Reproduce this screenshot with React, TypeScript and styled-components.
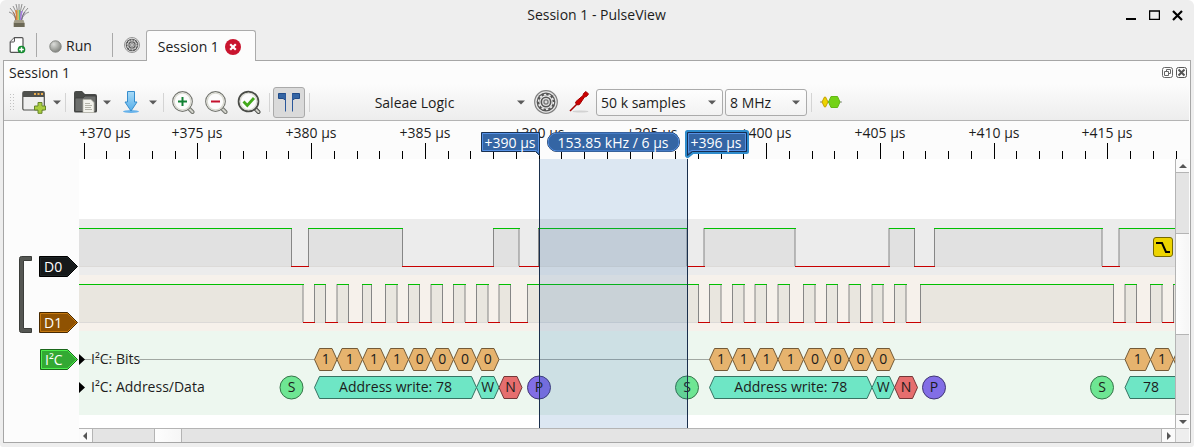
import React from "react";
import styled, { createGlobalStyle } from "styled-components";

const GlobalStyle = createGlobalStyle`
  * { box-sizing: border-box; }
  body {
    margin: 0;
    background: #fff;
    color: #1c1c1c;
    font: 14px/20px "Open Sans", "Noto Sans", sans-serif;
  }
  button, select { font: inherit; color: inherit; }
  svg { display: block; flex: none; }
`;

const Window = styled.main`
  display: flex;
  flex-direction: column;
  min-height: 100vh;
  padding: 0 3px 4px;
  background: #eeeeee;
  border-radius: 6px 6px 3px 3px;
`;

const TitleBar = styled.header`
  display: grid;
  grid-template-columns: 1fr auto 1fr;
  align-items: center;
  height: 30px;
  padding: 0 6px 0 5px;
`;

const Title = styled.h1`
  margin: 0;
  font-size: 14px;
  font-weight: 400;
`;

const WindowControls = styled.div`
  display: flex;
  justify-content: flex-end;
  gap: 7px;
`;

const IconButton = styled.button<{ $w: number }>`
  display: flex;
  align-items: center;
  justify-content: center;
  flex: none;
  width: ${(p) => p.$w}px;
  padding: 0;
  border: 0;
  background: none;
`;

const TabStrip = styled.nav`
  display: flex;
  align-items: center;
  height: 30px;
  padding-left: 5px;
`;

const RunButton = styled.button`
  display: flex;
  align-items: center;
  gap: 4px;
  padding: 2px 0 0;
  border: 0;
  background: none;
`;

const Divider = styled.span<{ $h: number; $gap: string; $dark?: boolean }>`
  flex: none;
  width: 1px;
  height: ${(p) => p.$h}px;
  margin: ${(p) => p.$gap};
  background: ${(p) => (p.$dark ? "#a9a9a9" : "#d4d4d4")};
`;

const Tab = styled.div`
  position: relative;
  z-index: 1;
  display: flex;
  align-items: center;
  gap: 6px;
  align-self: stretch;
  margin: 0 0 -1px 6px;
  padding: 1px 14px 0 11px;
  border: 1px solid #ababab;
  border-bottom: 0;
  border-radius: 3px 3px 0 0;
  background: #fcfcfc;
`;

const TabLabel = styled.button`
  padding: 0;
  border: 0;
  background: none;
`;

const Panel = styled.section`
  display: flex;
  flex: 1;
  flex-direction: column;
  border: 1px solid #a6a6a6;
  background: #fcfcfc;
`;

const PanelHead = styled.div`
  display: flex;
  align-items: center;
  justify-content: space-between;
  height: 23px;
  padding: 0 3px 0 5px;
`;

const PanelTitle = styled.h2`
  margin: 0;
  font-size: 14px;
  font-weight: 400;
`;

const DockButtons = styled.div`
  display: flex;
  gap: 3px;
`;

const Toolbar = styled.div`
  display: flex;
  align-items: center;
  height: 37px;
  margin-right: 1px;
  padding-left: 5px;
  border-bottom: 1px solid #b4b4b4;
  background: linear-gradient(#fcfcfc, #ededed);
`;

const ToggleButton = styled.button`
  display: flex;
  align-items: center;
  justify-content: center;
  flex: none;
  width: 32px;
  height: 31px;
  padding: 0;
  border: 1px solid #aaaaaa;
  border-radius: 3px;
  background: #dadada;
`;

const DeviceButton = styled.button`
  display: flex;
  align-items: center;
  width: 217px;
  flex: none;
  padding: 1px 4px 0 0;
  border: 0;
  background: none;
  span { flex: 1; text-align: center; }
`;

const Combo = styled.label<{ $w: number }>`
  display: flex;
  align-items: center;
  flex: none;
  width: ${(p) => p.$w}px;
  height: 27px;
  margin-right: 2px;
  padding-right: 6px;
  border: 1px solid #ababab;
  border-radius: 3px;
  background: linear-gradient(#fefefe, #f2f2f2);
  select {
    flex: 1;
    min-width: 0;
    height: 25px;
    padding: 1px 0 0 4px;
    border: 0;
    outline: 0;
    appearance: none;
    background: none;
  }
`;

const View = styled.div`
  display: grid;
  flex: 1;
  grid-template-columns: 75px minmax(0, 1fr) 14px;
  grid-template-rows: 38px 1fr 14px;
  padding-right: 1px;
`;

const RulerCell = styled.div`
  grid-column: 2 / 4;
`;

const Gutter = styled.div`
  display: flex;
  flex-direction: column;
  align-items: flex-end;
  gap: 16px;
  padding: 97px 1px 0 0;
`;

const ChannelGroup = styled.div`
  display: flex;
  gap: 7px;
`;

const ChannelList = styled.div`
  display: flex;
  flex-direction: column;
  gap: 35px;
`;

const TagButton = styled.button`
  display: grid;
  align-items: center;
  padding: 0;
  border: 0;
  background: none;
  color: #fff;
  text-align: left;
  > * { grid-area: 1 / 1; }
  span { padding-left: 5px; line-height: 20px; }
`;

const ChartCell = styled.div`
  position: relative;
  overflow: hidden;
  background: #fff;
`;

const TriggerBadge = styled.button`
  position: absolute;
  top: 78px;
  right: 2px;
  width: 20px;
  height: 20px;
  padding: 0;
  border: 1px solid #766a00;
  border-radius: 3px;
  background: #edd400;
`;

const ScrollTrack = styled.div<{ $vertical?: boolean }>`
  display: flex;
  flex-direction: ${(p) => (p.$vertical ? "column" : "row")};
  background: #e4e4e4;
  border: 0 solid #b4b4b4;
  border-width: ${(p) => (p.$vertical ? "0 0 0 1px" : "1px 0 0 0")};
`;

const ScrollArrow = styled.button`
  display: flex;
  align-items: center;
  justify-content: center;
  flex: none;
  width: 13px;
  height: 13px;
  padding: 0;
  border: 0;
  background: #fafafa;
`;

const ScrollSpace = styled.div<{ $grow: number; $vertical?: boolean }>`
  flex: ${(p) => p.$grow} 0 0;
  border: 0 solid #b4b4b4;
  border-width: ${(p) => (p.$vertical ? "1px 0" : "0 1px")};
`;

const ScrollThumb = styled.div<{ $grow: number }>`
  flex: ${(p) => p.$grow} 0 0;
  background: linear-gradient(90deg, #fdfdfd, #f6f6f6);
`;

const Corner = styled.div`
  border: solid #c4c4c4;
  border-width: 1px 0 0 1px;
  background: #eeeeee;
`;

const Caret = () => (
  <svg width="8" height="5" viewBox="0 0 8 5">
    <path d="M0 .5h8L4 4.5z" fill="#5a5a5a" />
  </svg>
);

const WireFan = () => (
  <svg width="22" height="24" viewBox="0 0 22 24">
    <g fill="none" strokeWidth=".9">
      <path d="M8 18Q7 11 1 9M8 17Q7 9 2 5M9 17Q9 8 5 3M13 18Q15 11 21 9M13 17Q15 9 20 5M12 17Q13 8 17 3M10 16Q10 7 8 1M12 16Q12 7 14 1M11 16V1" stroke="#858585" />
      <path d="M8 18Q8 13 5 9" stroke="#a56b4b" />
      <path d="M9 18Q9 12 8 7" stroke="#e08334" strokeWidth="1.5" />
      <path d="M10.3 18V7" stroke="#ded05a" strokeWidth="1.3" />
      <path d="M11.5 18V7" stroke="#58b884" strokeWidth="1.3" />
      <path d="M12.5 18Q12.5 12 14 8" stroke="#a77be1" strokeWidth="1.5" />
      <path d="M13.5 18Q14 12 17 9" stroke="#716487" />
    </g>
    <path d="M6.5 17h9l1 3v4H5.500v-4z" fill="#a19c88" />
    <path d="M6 20h10.500v4H6z" fill="#6c6957" />
  </svg>
);

const NewSessionIcon = () => (
  <svg width="17" height="17" viewBox="0 0 17 17">
    <path d="M5.500 .7H13q1 0 1 1V14.300q0 1-1 1H2.200q-1 0-1-1V5z" fill="#fff" stroke="#555" strokeWidth="1.200" />
    <path d="M1.200 5h3.300q1 0 1-1V.7" fill="#eee" stroke="#555" />
    <circle cx="12.500" cy="12.500" r="3.800" fill="#138a2f" />
    <path d="M12.500 10.200v4.600M10.200 12.500h4.600" stroke="#fff" strokeWidth="1.400" />
  </svg>
);

const RunIcon = () => (
  <svg width="13" height="13" viewBox="0 0 13 13">
    <defs>
      <radialGradient id="ball" cx=".35" cy=".3" r=".8">
        <stop offset="0" stopColor="#dcddda" />
        <stop offset=".5" stopColor="#aaaca7" />
        <stop offset="1" stopColor="#777974" />
      </radialGradient>
    </defs>
    <circle cx="6.500" cy="6.500" r="5.700" fill="url(#ball)" stroke="#858783" />
  </svg>
);

const GearIcon = ({ size }: { size: number }) => (
  <svg width={size} height={size} viewBox="0 0 24 24">
    <circle cx="12" cy="12" r="11.300" fill="#e8e8e8" stroke="#828282" strokeWidth="1.200" />
    <circle cx="12" cy="12" r="9.400" fill="#555555" />
    <circle cx="12" cy="12" r="7.400" fill="none" stroke="#ededed" strokeWidth="1.500" strokeDasharray="2.300 2.349" />
    <circle cx="12" cy="12" r="6.100" fill="none" stroke="#ededed" strokeWidth="1.200" />
    <circle cx="12" cy="12" r="3.300" fill="#777" stroke="#dedede" strokeWidth="1.200" />
    <circle cx="12" cy="12" r="1.400" fill="#dedede" />
  </svg>
);

const CloseTabIcon = () => (
  <svg width="16" height="16" viewBox="0 0 16 16">
    <circle cx="8" cy="8" r="8" fill="#c9152f" />
    <path d="M5.200 5.200l5.600 5.600M10.800 5.200l-5.600 5.600" stroke="#fff" strokeWidth="2.200" />
  </svg>
);

const AddDecoderIcon = () => (
  <svg width="24" height="24" viewBox="0 0 24 24">
    <rect x=".8" y="1.500" width="21.500" height="18.500" rx="1.500" fill="#efefef" stroke="#50524e" strokeWidth="1.200" />
    <path d="M1 2h21v5H1z" fill="#50524e" />
    <path d="M12 3h2v2h-2zM15.500 3h2v2h-2zM19 3h2v2h-2z" fill="#e9ac4d" />
    <path d="M16 12.500h4v3.500h3.500v4H20v3.300h-4V20h-3.500v-4H16z" fill="#a9cd3e" stroke="#66852a" />
  </svg>
);

const FolderIcon = () => (
  <svg width="25" height="24" viewBox="0 0 25 24">
    <path d="M1 21V3q0-2 2-2h6l3 3h10q2 0 2 2v15q0 1.500-1.500 1.500h-20Q1 22.500 1 21z" fill="#484a48" />
    <path d="M2 9q0-1 1-1h7l2-2h11v14.500q0 1-1 1H3q-1 0-1-1z" fill="#6d6f6d" stroke="#3c3e3c" strokeWidth=".8" />
    <path d="M10 9.500h8l3 3v10H10z" fill="#f2f2ec" stroke="#b3b3a8" strokeWidth=".7" />
    <path d="M12 13.500h5M12 15.500h7M12 17.500h6M12 19.500h7" stroke="#b3b3a8" />
  </svg>
);

const SaveIcon = () => (
  <svg width="18" height="24" viewBox="0 0 18 24">
    <defs>
      <linearGradient id="save" x2="0" y2="1">
        <stop offset="0" stopColor="#a9dbf7" />
        <stop offset="1" stopColor="#55aeea" />
      </linearGradient>
    </defs>
    <ellipse cx="9" cy="21.500" rx="8" ry="1.500" fill="#67b2ea" />
    <path d="M5.500 1.500h7V12H15l-6 9-6-9h2.500z" fill="url(#save)" stroke="#358dcd" />
  </svg>
);

const ZoomIcon = ({ mode }: { mode: "in" | "out" | "fit" }) => {
  const outline = mode === "fit" ? "#4a4c48" : "#73756f";
  return (
    <svg width="24" height="24" viewBox="0 0 24 24">
      <path d="M17 17.500l4.500 4.500" stroke={outline} strokeWidth="4" strokeLinecap="round" />
      <path d="M17 17.500l4.500 4.500" stroke="#d3d4cc" strokeWidth="2" strokeLinecap="round" />
      <circle cx="11.500" cy="11.500" r="9.800" fill="#fcfcfc" stroke={outline} strokeWidth={mode === "fit" ? 2 : 1.2} />
      <circle cx="11.500" cy="11.500" r="8.400" fill="none" stroke="#dadbd2" strokeWidth="1.400" />
      {mode === "in" && <path d="M11.500 7v9M7 11.500h9" stroke="#128234" strokeWidth="2" />}
      {mode === "out" && <path d="M7 11.500h9" stroke="#c5112d" strokeWidth="2" />}
      {mode === "fit" && <path d="M6.500 11.500l3.800 4 6.700-7.500" fill="none" stroke="#43a91b" strokeWidth="2.800" />}
    </svg>
  );
};

const CursorsIcon = () => (
  <svg width="22" height="20" viewBox="0 0 22 20">
    <path d="M.5 1.500h7v6.500L5 6.500H.500zM21.500 1.500h-7v6.500L17 6.500h4.500z" fill="#3465a4" stroke="#204a87" />
    <path d="M7.500 1v18.500M14.500 1v18.500" stroke="#2b589b" />
  </svg>
);

const ProbeIcon = () => (
  <svg width="21" height="22" viewBox="0 0 21 22">
    <ellipse cx="11.500" cy="20.500" rx="8" ry="1" fill="#d2d2d2" />
    <path d="M1 20L9 12" stroke="#a40000" strokeWidth="1.600" />
    <path d="M7 10.500l7-6 .5-2L17 .5l2.500 2.500-2 2.500-2 .5-5 7.500-2 .5-2-2z" fill="#cc0000" stroke="#a40000" />
  </svg>
);

const DecodersIcon = () => (
  <svg width="22" height="14" viewBox="0 0 22 14">
    <path d="M0 7h22" stroke="#888" />
    <path d="M2 7l2.500-5h1L8 7l-2.500 5h-1z" fill="#edd400" stroke="#c4a000" />
    <path d="M8.500 7l2.500-5.500h6.500L20 7l-2.500 5.500H11z" fill="#73d216" stroke="#62b814" />
  </svg>
);

const arrowPaths: Record<string, string> = {
  up: "M0 6l4-4 4 4z",
  down: "M0 2l4 4 4-4z",
  left: "M5 0L1 4l4 4z",
  right: "M2 0l4 4-4 4z",
};

const Arrow = ({ dir }: { dir: string }) => (
  <ScrollArrow aria-label={"Scroll " + dir}>
    <svg width="8" height="8" viewBox="0 0 8 8">
      <path d={arrowPaths[dir]} fill="#555" />
    </svg>
  </ScrollArrow>
);

const tagShape = (inset: number, w: number) =>
  `M${inset} ${inset}H${w - 10.500}L${w - inset} 10.500L${w - 10.500} ${21 - inset}H${inset}z`;

function ChannelTag(p: { name: string; w: number; fill: string; light: string; dark: string }) {
  return (
    <TagButton>
      <svg width={p.w} height="21">
        <path d={tagShape(0.5, p.w)} fill={p.fill} stroke={p.dark} />
        <path d={tagShape(1.5, p.w)} fill="none" stroke={p.light} />
      </svg>
      <span>{p.name}</span>
    </TagButton>
  );
}

/* Time axis: 22.75px per microsecond, +380 µs sits 232.5px into the view. */
const timeToX = (t: number) => Math.floor(232.5 + 22.75 * (t - 380));
const times = Array.from({ length: 49 }, (_, i) => 370 + i);

function Ruler() {
  return (
    <svg width="100%" height="38" fill="#1c1c1c">
      {times.map((t) => {
        const major = t % 5 === 0;
        return <rect key={t} x={timeToX(t)} y={major ? 22 : 30} width="1" height={major ? 16 : 8} fill="#000" />;
      })}
      {times.filter((t) => t % 5 === 0).map((t) => (
        <text key={t} x={Math.max(timeToX(t), 26)} y="17" textAnchor="middle">{`+${t} µs`}</text>
      ))}
      <path d="M402.500 11.500h58v23l-4-4h-54z" fill="#3465a4" stroke="#1a3252" />
      <path d="M403.500 12.500h56v19l-2-2h-54z" fill="none" stroke="#5591e6" />
      <path d="M608.500 11.500h59v19h-54l-5 4z" fill="#3465a4" stroke="#2e8bcb" strokeWidth="5" strokeLinejoin="round" />
      <path d="M608.500 11.500h59v19h-54l-5 4z" fill="#3465a4" stroke="#142c52" />
      <path d="M609.500 12.500h57v17h-54l-3 2z" fill="none" stroke="#5591e6" />
      <rect x="468.500" y="11.500" width="132" height="19" rx="9.500" fill="#3465a4" stroke="#1a3252" />
      <rect x="469" y="12" width="131" height="18" rx="9" fill="none" stroke="#5591e6" />
      <g fill="#fff" textAnchor="middle">
        <text x="431" y="27">+390 µs</text>
        <text x="534" y="27">153.85 kHz / 6 µs</text>
        <text x="637" y="27">+396 µs</text>
      </g>
    </svg>
  );
}

/* Each list holds the x of every edge; the line starts high and toggles. */
const d0Edges = [212.5, 229.5, 323.5, 414.5, 440, 459.5, 608, 625, 716, 810, 835.5, 855.5, 1023, 1040];
const d1Edges = [
  224, 235.5, 246.5, 258, 269.5, 283.5, 292.5, 306.5, 318, 329.5, 340.5, 352, 363.5, 374.5, 386, 397.5, 409, 420, 431.5,
  448.5, 619.5, 630.5, 642, 653.5, 665, 676, 687.5, 699, 710.5, 724.5, 736, 747.5, 758.5, 770, 781.5, 793, 804, 815.5,
  827, 841.5, 1034.5, 1046, 1057.5, 1071.5, 1083, 1094.5,
];
const END = 3000;

function Trace({ edges, top, fill }: { edges: number[]; top: number; fill: string }) {
  const points = [0, ...edges, END];
  return (
    <g>
      <rect y={top + 38} width="100%" height="1" fill="#dcdad8" />
      {points.slice(0, -1).map((x, i) => {
        const w = points[i + 1] - x;
        return i % 2 === 0 ? <rect key={x} x={x} y={top} width={w} height="38" fill={fill} /> : null;
      })}
      {edges.map((x) => (
        <rect key={x} x={x - 0.5} y={top} width="1" height="38" fill="#868686" />
      ))}
      {points.slice(0, -1).map((x, i) => {
        const low = i % 2 === 1;
        const from = Math.floor(x);
        return (
          <rect key={x} x={from} y={low ? top + 38 : top} width={Math.floor(points[i + 1]) - from + 1} height="1" fill={low ? "#c80000" : "#00c000"} />
        );
      })}
    </g>
  );
}

const palette: Record<string, [string, string]> = {
  bit: ["#e6b36e", "#735a37"],
  data: ["#6ee6c5", "#377363"],
  nack: ["#e66e6e", "#733737"],
  start: ["#6ee693", "#37734a"],
  stop: ["#826ee6", "#413773"],
};

function Hex(p: { from: number; to: number; y: number; kind: string; label: string; labelX?: number }) {
  const { from: a, to: b, y } = p;
  const [fill, stroke] = palette[p.kind];
  return (
    <g>
      <path d={`M${a} ${y}L${a + 5} ${y - 11}H${b - 5}L${b} ${y}L${b - 5} ${y + 11}H${a + 5}z`} fill={fill} stroke={stroke} />
      <text x={p.labelX ?? (a + b) / 2} y={Math.floor(y) + 5} textAnchor="middle">{p.label}</text>
    </g>
  );
}

function Dot({ x, kind, label }: { x: number; kind: string; label: string }) {
  const [fill, stroke] = palette[kind];
  return (
    <g>
      <circle cx={x} cy="228.500" r="11.500" fill={fill} stroke={stroke} />
      <text x={x} y="233" textAnchor="middle">{label}</text>
    </g>
  );
}

const bitFrames = [
  [235.5, 258, 283.5, 306.5, 329.5, 352, 374.5, 397.5, 420],
  [630.5, 653.5, 676, 699, 724.5, 747.5, 770, 793, 815.5],
  [1046, 1071.5, 1094.5, 1118],
];

function Chart() {
  return (
    <svg width="100%" height="269" fill="#1c1c1c">
      <rect y="60" width="100%" height="56" fill="#ececec" />
      <rect y="116" width="100%" height="56" fill="#f6f1eb" />
      <rect y="172" width="100%" height="84" fill="#edf7ef" />
      <Trace edges={d0Edges} top={69} fill="#e1e1e1" />
      <Trace edges={d1Edges} top={125} fill="#e9e6df" />
      <rect y="200" width="100%" height="1" fill="#a1a8a2" />
      {bitFrames.map((bounds) =>
        bounds.slice(0, -1).map((x, i) => (
          <Hex key={x} from={x} to={bounds[i + 1]} y={200.5} kind="bit" label={i < 4 ? "1" : "0"} />
        ))
      )}
      <Hex from={235.5} to={397.5} y={228.5} kind="data" label="Address write: 78" />
      <Hex from={397.5} to={420} y={228.5} kind="data" label="W" />
      <Hex from={420} to={443} y={228.5} kind="nack" label="N" />
      <Hex from={630.5} to={793} y={228.5} kind="data" label="Address write: 78" />
      <Hex from={793} to={815.5} y={228.5} kind="data" label="W" />
      <Hex from={815.5} to={838.5} y={228.5} kind="nack" label="N" />
      <Hex from={1046} to={1209.5} y={228.5} kind="data" label="78" labelX={1072} />
      <Dot x={212.5} kind="start" label="S" />
      <Dot x={460} kind="stop" label="P" />
      <Dot x={608} kind="start" label="S" />
      <Dot x={855} kind="stop" label="P" />
      <Dot x={1023} kind="start" label="S" />
      <path d="M0 195l6 5.500-6 5.500zM0 223l6 5.500-6 5.500z" fill="#000" />
      <g stroke="#edf7ef" strokeWidth="2" paintOrder="stroke">
        <text x="12" y="205">I²C: Bits</text>
        <text x="12" y="233">I²C: Address/Data</text>
      </g>
      <rect x="461" width="147" height="269" fill="#2468af" fillOpacity=".16" />
      <rect x="460" width="1" height="269" fill="#1a2f4c" />
      <rect x="608" width="1" height="269" fill="#1a2f4c" />
    </svg>
  );
}

export default function App() {
  return (
    <Window>
      <GlobalStyle />
      <TitleBar>
        <WireFan />
        <Title>Session 1 - PulseView</Title>
        <WindowControls>
          <IconButton $w={16} aria-label="Minimize">
            <svg width="10" height="10"><path d="M0 9h10" stroke="#000" strokeWidth="2" /></svg>
          </IconButton>
          <IconButton $w={16} aria-label="Maximize">
            <svg width="11" height="10"><path d="M.5 1v8.500h10V1M0 1h11" fill="none" stroke="#000" strokeWidth="1.500" /></svg>
          </IconButton>
          <IconButton $w={16} aria-label="Close">
            <svg width="11" height="11"><path d="M1 1l9 9M10 1l-9 9" stroke="#000" strokeWidth="2.200" /></svg>
          </IconButton>
        </WindowControls>
      </TitleBar>
      <TabStrip>
        <IconButton $w={18} aria-label="New session"><NewSessionIcon /></IconButton>
        <Divider $h={24} $gap="0 12px 0 10px" $dark />
        <RunButton><RunIcon />Run</RunButton>
        <Divider $h={24} $gap="0 11px 0 20px" $dark />
        <IconButton $w={16} aria-label="Settings"><GearIcon size={16} /></IconButton>
        <Tab>
          <TabLabel>Session 1</TabLabel>
          <IconButton $w={16} aria-label="Close session"><CloseTabIcon /></IconButton>
        </Tab>
      </TabStrip>
      <Panel>
        <PanelHead>
          <PanelTitle>Session 1</PanelTitle>
          <DockButtons>
            <IconButton $w={11} aria-label="Float panel">
              <svg width="11" height="11" fill="none" stroke="#666">
                <rect x=".5" y=".5" width="10" height="10" rx="2" />
                <path d="M4.500 4V2.500h4v4H7M2.500 4.500h4v4h-4z" />
              </svg>
            </IconButton>
            <IconButton $w={11} aria-label="Close panel">
              <svg width="11" height="11" fill="none" stroke="#555">
                <rect x=".5" y=".5" width="10" height="10" rx="2" />
                <path d="M2.500 2.500l6 6M8.500 2.500l-6 6" strokeWidth="2" />
              </svg>
            </IconButton>
          </DockButtons>
        </PanelHead>
        <Toolbar>
          <svg width="6" height="18" stroke="#c2c2c2" strokeDasharray="1 2">
            <path d="M1.500 1v17M4.500 1v17" />
          </svg>
          <IconButton $w={38} aria-label="Add view"><AddDecoderIcon /></IconButton>
          <IconButton $w={8} aria-label="View menu"><Caret /></IconButton>
          <Divider $h={19} $gap="0 5px 0 4px" />
          <IconButton $w={29} aria-label="Open"><FolderIcon /></IconButton>
          <IconButton $w={14} aria-label="Open menu"><Caret /></IconButton>
          <IconButton $w={33} aria-label="Save"><SaveIcon /></IconButton>
          <IconButton $w={11} aria-label="Save menu"><Caret /></IconButton>
          <Divider $h={19} $gap="0 3px 0 5px" />
          <IconButton $w={32} aria-label="Zoom in"><ZoomIcon mode="in" /></IconButton>
          <IconButton $w={33} aria-label="Zoom out"><ZoomIcon mode="out" /></IconButton>
          <IconButton $w={33} aria-label="Zoom to fit"><ZoomIcon mode="fit" /></IconButton>
          <Divider $h={19} $gap="0 3px 0 4px" />
          <ToggleButton aria-label="Show cursors" aria-pressed="true"><CursorsIcon /></ToggleButton>
          <Divider $h={19} $gap="0 2px 0 4px" />
          <DeviceButton><span>Saleae Logic</span><Caret /></DeviceButton>
          <IconButton $w={34} aria-label="Configure device"><GearIcon size={24} /></IconButton>
          <IconButton $w={33} aria-label="Configure channels"><ProbeIcon /></IconButton>
          <Combo $w={127}>
            <select aria-label="Sample count"><option>50 k samples</option></select>
            <Caret />
          </Combo>
          <Combo $w={82}>
            <select aria-label="Sample rate"><option>8 MHz</option></select>
            <Caret />
          </Combo>
          <Divider $h={19} $gap="0 3px 0 2px" />
          <IconButton $w={32} aria-label="Protocol decoders"><DecodersIcon /></IconButton>
        </Toolbar>
        <View>
          <div />
          <RulerCell><Ruler /></RulerCell>
          <Gutter>
            <ChannelGroup>
              <svg width="13" height="77">
                <path d="M12.500 .5h-10q-2 0-2 2v72q0 2 2 2h10v-4h-8v-68h8z" fill="#555753" stroke="#3c3e3b" />
              </svg>
              <ChannelList>
                <ChannelTag name="D0" w={39} fill="#16191a" light="#1d2426" dark="#000" />
                <ChannelTag name="D1" w={39} fill="#8f5202" light="#c47810" dark="#472901" />
              </ChannelList>
            </ChannelGroup>
            <ChannelTag name="I²C" w={38} fill="#33a933" light="#4df04d" dark="#1b661b" />
          </Gutter>
          <ChartCell>
            <Chart />
            <TriggerBadge aria-label="Falling edge trigger">
              <svg width="18" height="18"><path d="M2 5h6l4 9h4" fill="none" stroke="#000" strokeWidth="2" /></svg>
            </TriggerBadge>
          </ChartCell>
          <ScrollTrack $vertical>
            <Arrow dir="up" />
            <ScrollSpace $grow={61} $vertical />
            <ScrollThumb $grow={102} />
            <ScrollSpace $grow={80} $vertical />
            <Arrow dir="down" />
          </ScrollTrack>
          <div />
          <ScrollTrack>
            <Arrow dir="left" />
            <ScrollSpace $grow={61} />
            <ScrollThumb $grow={26} />
            <ScrollSpace $grow={981} />
            <Arrow dir="right" />
          </ScrollTrack>
          <Corner />
        </View>
      </Panel>
    </Window>
  );
}
